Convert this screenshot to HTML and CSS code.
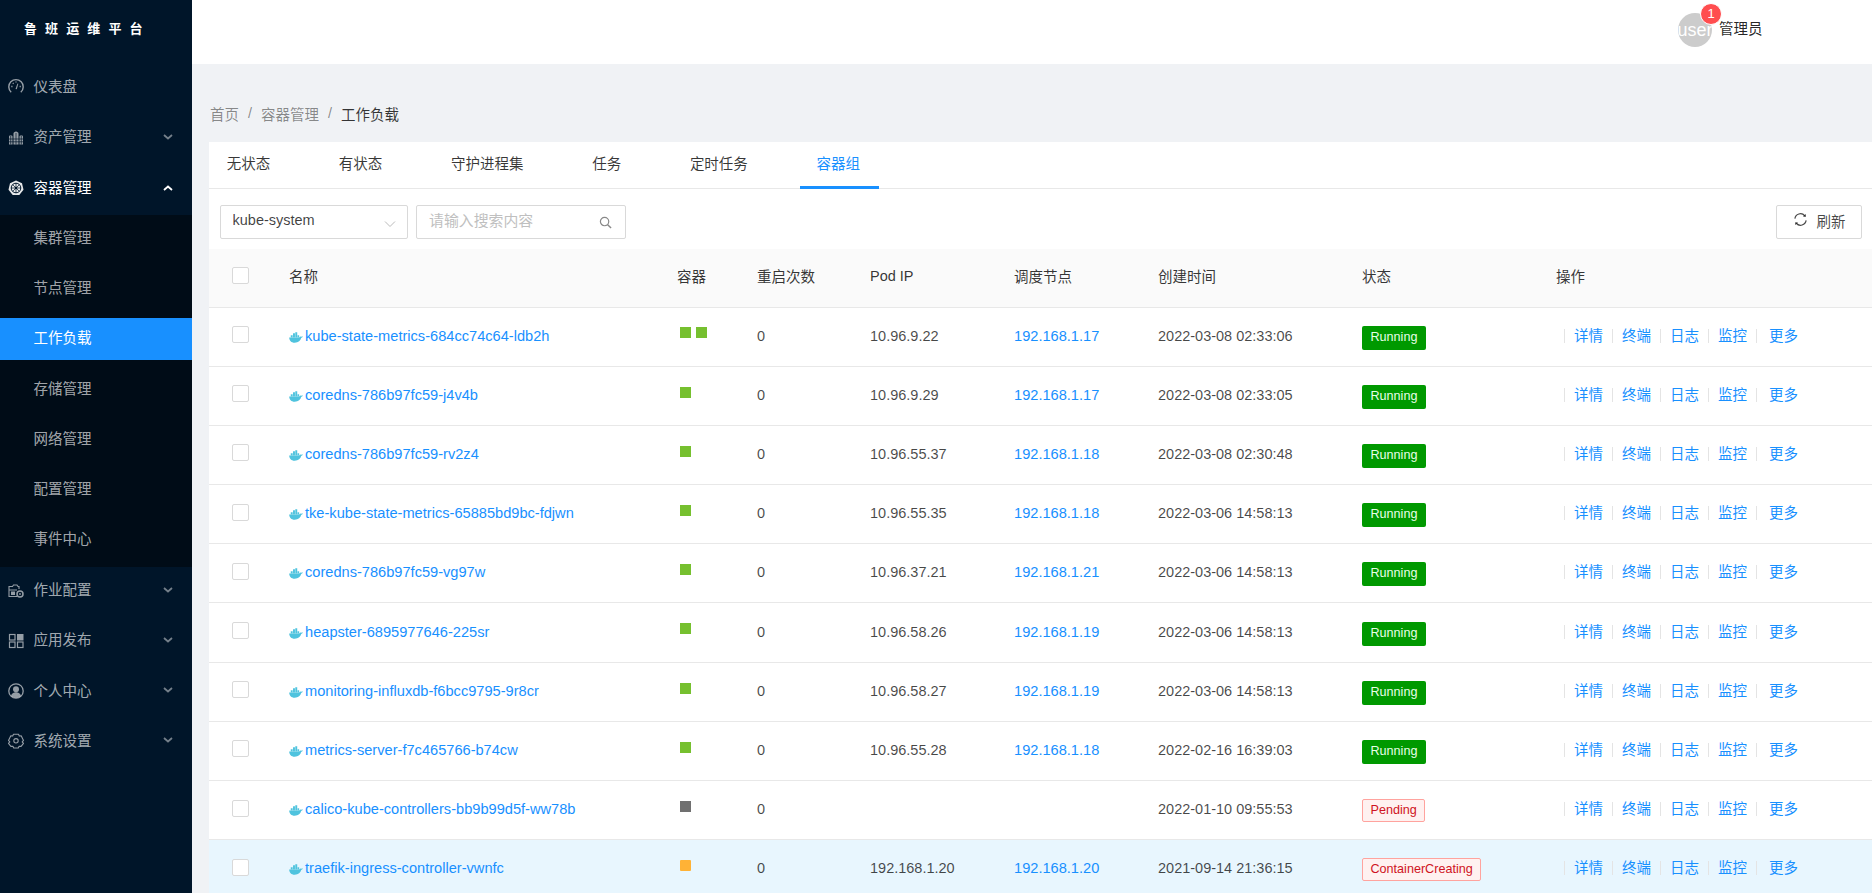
FILE: index.html
```html
<!DOCTYPE html>
<html lang="zh-CN">
<head>
<meta charset="utf-8">
<title>工作负载</title>
<link rel="stylesheet" href="styles.css">
</head>
<body>
<svg class="defs" width="0" height="0" aria-hidden="true">
  <symbol id="whale" viewBox="0 0 16 12">
    <path d="M.2 6h11.500c.5-1 1.600-1.300 2.800-1l1.400-.5c-.3 1.100-1 1.700-1.900 1.900C13.200 9.500 10.800 12 6.500 12 2.500 12 .3 9.500.2 6z" fill="currentColor"/>
    <path d="M2 3.500h2.200v2.600H2zM4.600 3.500h2.200v2.600H4.600zM7.200 3.500h2.200v2.600H7.200zM9.800 3.500h1.800v2.600H9.800zM4.600 1h2.200v2.600H4.600zM7.200 1h2.200v2.600H7.200zM7.200 0h2.200v1.200H7.200z" fill="currentColor"/>
  </symbol>
  <symbol id="chev" viewBox="0 0 10 6">
    <path d="M1 1l4 3.500L9 1" fill="none" stroke="currentColor" stroke-width="1.800"/>
  </symbol>
</svg>
<div class="app">
  <aside class="side">
    <div class="logo">鲁 班 运 维 平 台</div>
    <nav class="menu">
      <a class="mi">
        <svg class="ic first" viewBox="0 0 16 16"><path d="M3.200 14.200A7.200 7.200 0 1 1 12.800 14.200" fill="none" stroke="currentColor" stroke-width="1.400"/><path d="M7.500 11l2-5.500.8.300L8.800 11.300z" fill="currentColor"/><path d="M3.300 8.500h1.200M4.800 5l.8.800M8 3.400v1.200M11.600 8.500h1.200" stroke="currentColor" stroke-width="1.300" fill="none"/></svg>
        <span class="lb">仪表盘</span>
      </a>
      <a class="mi">
        <svg class="ic" viewBox="0 0 16 16"><path d="M1 6.500q0-1 1-1h1.500q1 0 1 1v8H1zM11.500 6.500q0-1 1-1H14q1 0 1 1v8h-3.500z" fill="currentColor"/><path d="M8 1.500c1.300 0 2.500 1 2.500 2.200v10.800h-5V3.700C5.500 2.500 6.700 1.500 8 1.500z" fill="currentColor"/><path d="M1 9h14M1 11.800h14M8 3v11.500M2.700 6v8.500M13.300 6v8.500" stroke="#001529" stroke-width=".7"/></svg>
        <span class="lb">资产管理</span>
        <svg class="chev"><use href="#chev"/></svg>
      </a>
      <a class="mi open">
        <svg class="ic" viewBox="0 0 16 16"><path d="M8 .4l6 2.900 1.500 6.500-4.200 5.300H4.700L.5 9.800 2 3.300z" fill="currentColor"/><circle cx="8" cy="8" r="4.800" fill="none" stroke="#001529" stroke-width="1"/><circle cx="8" cy="8" r="1.300" fill="#001529"/><path d="M8 3v10M3 8h10M4.500 4.500l7 7M11.500 4.500l-7 7" stroke="#001529" stroke-width=".7"/></svg>
        <span class="lb">容器管理</span>
        <svg class="chev up"><use href="#chev"/></svg>
      </a>
      <div class="sub">
        <a class="si">集群管理</a>
        <a class="si">节点管理</a>
        <a class="si active">工作负载</a>
        <a class="si">存储管理</a>
        <a class="si">网络管理</a>
        <a class="si">配置管理</a>
        <a class="si">事件中心</a>
      </div>
      <a class="mi">
        <svg class="ic" viewBox="0 0 16 16"><path d="M9 13.500H1V3.500h3.500l1-1.500H9l1 1.500h1V6M1 7h8" fill="none" stroke="currentColor" stroke-width="1.100"/><circle cx="12" cy="11" r="3" fill="none" stroke="currentColor" stroke-width="1.500"/><circle cx="12" cy="11" r=".9" fill="currentColor"/><path d="M3 8.500h4v3.500H3z" fill="currentColor"/></svg>
        <span class="lb">作业配置</span>
        <svg class="chev"><use href="#chev"/></svg>
      </a>
      <a class="mi">
        <svg class="ic" viewBox="0 0 16 16"><rect x="1.500" y="1.500" width="5.500" height="5.500" fill="none" stroke="currentColor" stroke-width="1.200"/><rect x="9" y="1" width="6.500" height="6.500" fill="currentColor"/><rect x="1.500" y="9" width="5.500" height="5.500" fill="none" stroke="currentColor" stroke-width="1.200"/><rect x="9.500" y="9" width="5.500" height="5.500" fill="none" stroke="currentColor" stroke-width="1.200"/></svg>
        <span class="lb">应用发布</span>
        <svg class="chev"><use href="#chev"/></svg>
      </a>
      <a class="mi">
        <svg class="ic" viewBox="0 0 16 16"><circle cx="8" cy="8" r="7.200" fill="none" stroke="currentColor" stroke-width="1.300"/><circle cx="8" cy="6.300" r="3" fill="currentColor"/><path d="M3 13c.6-2.600 2.500-3.800 5-3.800s4.400 1.200 5 3.800c-1.300 1.200-3 1.800-5 1.800s-3.700-.6-5-1.800z" fill="currentColor"/></svg>
        <span class="lb">个人中心</span>
        <svg class="chev"><use href="#chev"/></svg>
      </a>
      <a class="mi">
        <svg class="ic" viewBox="0 0 16 16"><path d="M5.500 1.800h5l.8 1.800 2-.1 2.200 4.500-1.300 1.500 1.300 1.500-2.400 3-2-.1-.8 1.700h-4.600l-.8-1.700-2 .1-2.400-3 1.300-1.500-1.300-1.500 2.200-4.500 2 .1z" fill="none" stroke="currentColor" stroke-width="1.100" stroke-linejoin="round" transform="translate(0 -.6)"/><circle cx="8" cy="7.800" r="2.200" fill="none" stroke="currentColor" stroke-width="1.100"/></svg>
        <span class="lb">系统设置</span>
        <svg class="chev"><use href="#chev"/></svg>
      </a>
    </nav>
  </aside>
  <div class="main">
    <header class="top">
      <div class="user">
        <div class="avatar-wrap">
          <span class="avatar"><span class="avatar-text">user</span></span>
          <span class="badge">1</span>
        </div>
        <span class="uname">管理员</span>
      </div>
    </header>
    <div class="crumb">
      <span class="c">首页</span><span class="sep">/</span><span class="c">容器管理</span><span class="sep">/</span><span class="cur">工作负载</span>
    </div>
    <section class="card">
      <div class="tabs">
        <span class="tab">无状态</span>
        <span class="tab">有状态</span>
        <span class="tab">守护进程集</span>
        <span class="tab">任务</span>
        <span class="tab">定时任务</span>
        <span class="tab on">容器组</span>
      </div>
      <div class="tools">
        <div class="sel">kube-system
          <svg class="sel-arrow" viewBox="0 0 12 8"><path d="M1 1.500l5 5 5-5" fill="none" stroke="currentColor" stroke-width="1"/></svg>
        </div>
        <div class="search">
          <span class="ph">请输入搜索内容</span>
          <svg class="mag" viewBox="0 0 14 14"><circle cx="6" cy="6" r="4.500" fill="none" stroke="currentColor" stroke-width="1.300"/><path d="M9.300 9.300L13 13" stroke="currentColor" stroke-width="1.500"/></svg>
        </div>
        <button class="refresh">
          <svg class="rf" viewBox="0 0 16 16"><path d="M2 7a6 6 0 0 1 10.500-3M14 9a6 6 0 0 1-10.500 3" fill="none" stroke="currentColor" stroke-width="1.300"/><path d="M13.800 2.200l-.2 3-3-.4zM2.200 13.800l.2-3 3 .4z" fill="currentColor"/></svg>
          <span>刷新</span>
        </button>
      </div>
      <table class="tbl">
        <colgroup>
          <col class="c-ck"><col class="c-name"><col class="c-box"><col class="c-rs"><col class="c-ip"><col class="c-node"><col class="c-time"><col class="c-st"><col class="c-op">
        </colgroup>
        <thead>
          <tr><th><i class="ck"></i></th><th>名称</th><th>容器</th><th>重启次数</th><th>Pod IP</th><th>调度节点</th><th>创建时间</th><th>状态</th><th>操作</th></tr>
        </thead>
        <tbody>
          <tr><td><i class="ck"></i></td><td><svg class="whale"><use href="#whale"/></svg><a class="lk">kube-state-metrics-684cc74c64-ldb2h</a></td><td><i class="sq g"></i><i class="sq g"></i></td><td>0</td><td>10.96.9.22</td><td><a class="lk">192.168.1.17</a></td><td>2022-03-08 02:33:06</td><td><span class="tag run">Running</span></td><td class="ops"><a>详情</a><a>终端</a><a>日志</a><a>监控</a><a class="more">更多</a></td></tr>
          <tr><td><i class="ck"></i></td><td><svg class="whale"><use href="#whale"/></svg><a class="lk">coredns-786b97fc59-j4v4b</a></td><td><i class="sq g"></i></td><td>0</td><td>10.96.9.29</td><td><a class="lk">192.168.1.17</a></td><td>2022-03-08 02:33:05</td><td><span class="tag run">Running</span></td><td class="ops"><a>详情</a><a>终端</a><a>日志</a><a>监控</a><a class="more">更多</a></td></tr>
          <tr><td><i class="ck"></i></td><td><svg class="whale"><use href="#whale"/></svg><a class="lk">coredns-786b97fc59-rv2z4</a></td><td><i class="sq g"></i></td><td>0</td><td>10.96.55.37</td><td><a class="lk">192.168.1.18</a></td><td>2022-03-08 02:30:48</td><td><span class="tag run">Running</span></td><td class="ops"><a>详情</a><a>终端</a><a>日志</a><a>监控</a><a class="more">更多</a></td></tr>
          <tr><td><i class="ck"></i></td><td><svg class="whale"><use href="#whale"/></svg><a class="lk">tke-kube-state-metrics-65885bd9bc-fdjwn</a></td><td><i class="sq g"></i></td><td>0</td><td>10.96.55.35</td><td><a class="lk">192.168.1.18</a></td><td>2022-03-06 14:58:13</td><td><span class="tag run">Running</span></td><td class="ops"><a>详情</a><a>终端</a><a>日志</a><a>监控</a><a class="more">更多</a></td></tr>
          <tr><td><i class="ck"></i></td><td><svg class="whale"><use href="#whale"/></svg><a class="lk">coredns-786b97fc59-vg97w</a></td><td><i class="sq g"></i></td><td>0</td><td>10.96.37.21</td><td><a class="lk">192.168.1.21</a></td><td>2022-03-06 14:58:13</td><td><span class="tag run">Running</span></td><td class="ops"><a>详情</a><a>终端</a><a>日志</a><a>监控</a><a class="more">更多</a></td></tr>
          <tr><td><i class="ck"></i></td><td><svg class="whale"><use href="#whale"/></svg><a class="lk">heapster-6895977646-225sr</a></td><td><i class="sq g"></i></td><td>0</td><td>10.96.58.26</td><td><a class="lk">192.168.1.19</a></td><td>2022-03-06 14:58:13</td><td><span class="tag run">Running</span></td><td class="ops"><a>详情</a><a>终端</a><a>日志</a><a>监控</a><a class="more">更多</a></td></tr>
          <tr><td><i class="ck"></i></td><td><svg class="whale"><use href="#whale"/></svg><a class="lk">monitoring-influxdb-f6bcc9795-9r8cr</a></td><td><i class="sq g"></i></td><td>0</td><td>10.96.58.27</td><td><a class="lk">192.168.1.19</a></td><td>2022-03-06 14:58:13</td><td><span class="tag run">Running</span></td><td class="ops"><a>详情</a><a>终端</a><a>日志</a><a>监控</a><a class="more">更多</a></td></tr>
          <tr><td><i class="ck"></i></td><td><svg class="whale"><use href="#whale"/></svg><a class="lk">metrics-server-f7c465766-b74cw</a></td><td><i class="sq g"></i></td><td>0</td><td>10.96.55.28</td><td><a class="lk">192.168.1.18</a></td><td>2022-02-16 16:39:03</td><td><span class="tag run">Running</span></td><td class="ops"><a>详情</a><a>终端</a><a>日志</a><a>监控</a><a class="more">更多</a></td></tr>
          <tr><td><i class="ck"></i></td><td><svg class="whale"><use href="#whale"/></svg><a class="lk">calico-kube-controllers-bb9b99d5f-ww78b</a></td><td><i class="sq k"></i></td><td>0</td><td></td><td></td><td>2022-01-10 09:55:53</td><td><span class="tag err">Pending</span></td><td class="ops"><a>详情</a><a>终端</a><a>日志</a><a>监控</a><a class="more">更多</a></td></tr>
          <tr class="hl"><td><i class="ck"></i></td><td><svg class="whale"><use href="#whale"/></svg><a class="lk">traefik-ingress-controller-vwnfc</a></td><td><i class="sq o"></i></td><td>0</td><td>192.168.1.20</td><td><a class="lk">192.168.1.20</a></td><td>2021-09-14 21:36:15</td><td><span class="tag err">ContainerCreating</span></td><td class="ops"><a>详情</a><a>终端</a><a>日志</a><a>监控</a><a class="more">更多</a></td></tr>
        </tbody>
      </table>
    </section>
  </div>
</div>
</body>
</html>
```
FILE: styles.css
```css
* { box-sizing: border-box; }
html, body { margin: 0; height: 100%; overflow: hidden; }
body {
  font-family: "Liberation Sans", "Noto Sans CJK SC", sans-serif;
  font-size: 14.500px;
  color: rgba(0, 0, 0, .65);
  background: #f0f2f5;
}
.defs { position: absolute; }
.app { display: flex; height: 893px; }

.side { width: 192px; flex: none; background: #001529; color: rgba(255, 255, 255, .65); }
.logo { height: 60px; padding: 20px 0 0 24px; color: #fff; font-size: 13px; font-weight: 700; line-height: 17px; word-spacing: 4.500px; }
.menu { display: flex; flex-direction: column; }
.mi { display: flex; align-items: center; height: 42px; margin: 6px 0 2.200px; padding: 0 0 2.500px 8px; }
.mi.open { color: #fff; margin-bottom: 0; }
.ic { width: 16px; height: 16px; flex: none; margin-top: 4px; opacity: .9; }
.ic.first { margin-top: 0; }
.lb { margin-left: 9.500px; }
.chev { width: 10px; height: 6px; margin-left: auto; margin-right: 19px; margin-top: 2px; opacity: .7; }
.chev.up { transform: rotate(180deg); opacity: 1; margin-top: 4px; }
.sub { display: flex; flex-direction: column; gap: 8.200px; margin-top: 6.600px; padding: 3px 0 5.800px; background: #000c17; }
.sub + .mi { margin-top: 2px; }
.si { display: flex; align-items: center; height: 42px; padding: 0 0 5px 33.500px; }
.si.active { background: #1890ff; color: #fff; }

.main { flex: 1; min-width: 0; display: flex; flex-direction: column; }
.top { height: 64px; flex: none; background: #fff; }
.user { display: flex; align-items: center; height: 60px; padding-left: 1486px; }
.avatar-wrap { position: relative; width: 34px; height: 34px; }
.avatar { display: block; width: 34px; height: 34px; border-radius: 50%; background: #ccc; color: #fff; overflow: hidden; text-align: center; font-size: 18px; line-height: 34px; }
.avatar-text { display: block; margin-left: -2px; width: 38px; }
.badge { position: absolute; top: -10px; left: 22px; width: 22px; height: 22px; border-radius: 50%; background: #ff4d4f; border: 1px solid #fff; color: #fff; font-size: 13px; line-height: 20px; text-align: center; }
.uname { margin-left: 7px; margin-top: -5px; color: rgba(0, 0, 0, .85); }

.crumb { display: flex; align-items: center; height: 78px; padding: 20px 0 0 18px; flex: none; }
.crumb .c { color: rgba(0, 0, 0, .45); }
.crumb .sep { margin: 0 9px; color: rgba(0, 0, 0, .45); }
.crumb .cur { color: rgba(0, 0, 0, .78); }

.card { margin-left: 17px; background: #fff; flex: 1; min-height: 0; overflow: hidden; }
.tabs { display: flex; gap: 33.300px; height: 47px; border-bottom: 1px solid #e8e8e8; }
.tab { padding: 0 17.700px; height: 47px; line-height: 45px; color: rgba(0, 0, 0, .78); }
.tab.on { margin-left: 1px; padding: 0 18.700px 0 16.700px; color: #1890ff; border-bottom: 3px solid #1890ff; }

.tools { display: flex; gap: 8px; height: 60px; padding: 16px 10px 0 11px; }
.sel, .search, .refresh { height: 34px; border: 1px solid #d9d9d9; border-radius: 2px; background: #fff; }
.sel { position: relative; width: 188px; padding-left: 11.500px; line-height: 28px; color: rgba(0, 0, 0, .75); }
.sel-arrow { position: absolute; right: 11px; top: 14px; width: 12px; height: 8px; color: #bbb; }
.search { position: relative; width: 210px; padding-left: 12px; line-height: 30px; }
.ph { color: #bfbfbf; font-size: 14.900px; }
.mag { position: absolute; right: 13px; top: 10px; width: 13px; height: 13px; color: #888; }
.refresh { margin-left: auto; width: 86px; display: flex; align-items: center; justify-content: center; gap: 9px; padding: 0 0 4px; font: inherit; color: rgba(0, 0, 0, .72); }
.rf { width: 15px; height: 15px; margin-top: -1px; }

.tbl { width: 1663px; border-collapse: collapse; table-layout: fixed; }
.c-ck { width: 64px; } .c-name { width: 388px; } .c-box { width: 80px; } .c-rs { width: 113px; }
.c-ip { width: 144px; } .c-node { width: 144px; } .c-time { width: 204px; } .c-st { width: 194px; } .c-op { width: 332px; }
.tbl th { height: 58px; padding: 0 0 4px 16px; background: #fafafa; font-weight: 400; text-align: left; color: rgba(0, 0, 0, .8); border-bottom: 1px solid #e8e8e8; }
.tbl td { height: 59.200px; padding: 0 0 2px 16px; border-bottom: 1px solid #e8e8e8; color: rgba(0, 0, 0, .72); white-space: nowrap; }
.tbl th:first-child, .tbl td:first-child { padding-left: 23px; }
.tbl td:first-child { padding-bottom: 4px; }
.hl td { background: #e8f6fe; }
.ck { display: block; width: 17px; height: 17px; border: 1px solid #d9d9d9; border-radius: 2px; background: #fff; }
.lk { color: #1890ff; font-size: 14.620px; }
.whale { width: 14px; height: 11px; margin-right: 2px; color: #4fc3de; vertical-align: -2px; }
.sq { display: inline-block; width: 11px; height: 11px; margin: 0 5px 6px 3px; background: #76c02f; vertical-align: middle; }
.sq + .sq { margin-left: 0; }
.sq.k { background: #707070; }
.sq.o { background: #ffb236; border-radius: 1px; }
.tag { display: inline-block; height: 24px; line-height: 23px; padding: 0 8.500px; border-radius: 2px; font-size: 12.600px; }
.run { margin-top: 4px; background: #009900; color: #e8ffe8; }
.err { height: 23px; margin-top: 3px; background: #fff1f0; color: #cf1322; border: 1px solid #ffa39e; line-height: 21px; padding: 0 7.500px; }
.tbl td.ops { padding-left: 24px; }
.ops a { display: inline-block; color: #1890ff; height: 14px; line-height: 14px; border-left: 1px solid #e4e4e4; padding: 0 9px; }
.ops a.more { padding-left: 12px; }
```
